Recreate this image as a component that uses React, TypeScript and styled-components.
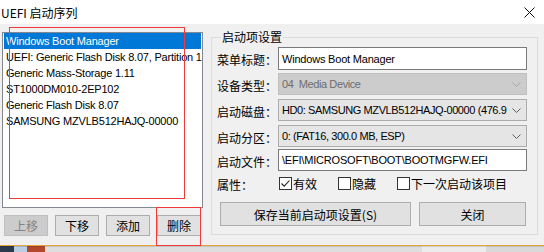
import React from 'react';
import styled, { createGlobalStyle } from 'styled-components';

const GlobalStyle = createGlobalStyle`
  html, body {
    margin: 0;
    padding: 0;
    background: #f0f0f0;
  }
  body {
    font-family: "Liberation Sans", "Noto Sans CJK SC", sans-serif;
    font-size: 11px;
    color: #000;
  }
  * {
    box-sizing: border-box;
  }
`;

const cjk = `"Noto Sans CJK SC", "Liberation Sans", sans-serif`;

const bootEntries = [
  'Windows Boot Manager',
  'UEFI: Generic Flash Disk 8.07, Partition 1',
  'Generic Mass-Storage 1.11',
  'ST1000DM010-2EP102',
  'Generic Flash Disk 8.07',
  'SAMSUNG MZVLB512HAJQ-00000',
];

const taskbar = [
  { w: 14, bg: '#2b3a4c' },
  { w: 13, bg: '#b9cde3' },
  { w: 18, bg: '#b4482a' },
  { w: 377, bg: '#dedede' },
  { w: 64, bg: '#ececec' },
  { w: 58, bg: '#d9d9d9' },
];

const App = () => {
  return (
    <>
      <GlobalStyle />
      <Window>
        <TitleBar>
          <Title>UEFI 启动序列</Title>
          <CloseIcon viewBox="0 0 11 11">
            <path d="M0.5 0.5 L10.5 10.5 M10.5 0.5 L0.5 10.5" stroke="#111" strokeWidth="1" />
          </CloseIcon>
        </TitleBar>

        <Body>
          <LeftPane>
            <ListBox>
              {bootEntries.map((name, i) => (
                <ListRow key={name} $selected={i === 0}>
                  {name}
                </ListRow>
              ))}
            </ListBox>
            <ButtonRow>
              <SmallButton disabled>上移</SmallButton>
              <SmallButton>下移</SmallButton>
              <SmallButton>添加</SmallButton>
              <SmallButton>删除</SmallButton>
            </ButtonRow>
          </LeftPane>

          <Group>
            <Legend>启动项设置</Legend>

            <FieldRow $gap={0} $h={23}>
              <Label>菜单标题：</Label>
              <TextBox>Windows Boot Manager</TextBox>
            </FieldRow>
            <FieldRow $gap={3} $h={22}>
              <Label>设备类型：</Label>
              <Select $disabled>
                <span>04&nbsp; Media Device</span>
                <Chevron $disabled />
              </Select>
            </FieldRow>
            <FieldRow $gap={4} $h={22}>
              <Label>启动磁盘：</Label>
              <Select>
                <span>HD0: SAMSUNG MZVLB512HAJQ-00000 (476.9</span>
                <Chevron />
              </Select>
            </FieldRow>
            <FieldRow $gap={4} $h={22}>
              <Label>启动分区：</Label>
              <Select>
                <span>0: (FAT16, 300.0 MB, ESP)</span>
                <Chevron />
              </Select>
            </FieldRow>
            <FieldRow $gap={2} $h={22}>
              <Label>启动文件：</Label>
              <TextBox>\EFI\MICROSOFT\BOOT\BOOTMGFW.EFI</TextBox>
            </FieldRow>
            <FieldRow $gap={3} $h={16}>
              <Label>属性：</Label>
              <CheckGroup>
                <CheckItem>
                  <CheckBox>
                    <svg width="11" height="11" viewBox="0 0 11 11">
                      <path d="M1.5 5.5 L4.2 8.2 L9.5 2.5" stroke="#222" strokeWidth="1.1" fill="none" />
                    </svg>
                  </CheckBox>
                  有效
                </CheckItem>
                <CheckItem>
                  <CheckBox />
                  隐藏
                </CheckItem>
                <CheckItem>
                  <CheckBox />
                  下一次启动该项目
                </CheckItem>
              </CheckGroup>
            </FieldRow>

            <ActionRow>
              <ActionButton $w={191}>保存当前启动项设置(S)</ActionButton>
              <ActionButton $w={107}>关闭</ActionButton>
            </ActionRow>
          </Group>
        </Body>

        <AccentLine />
        <Taskbar>
          {taskbar.map((s, i) => (
            <TaskSegment key={i} $w={s.w} $bg={s.bg} />
          ))}
        </Taskbar>

        <Marker style={{ left: 9, top: 27, width: 176, height: 172 }} />
        <Marker style={{ left: 156, top: 207, width: 45, height: 39 }} />
      </Window>
    </>
  );
};

const Chevron = ({ $disabled }: { $disabled?: boolean }) => (
  <ChevronIcon viewBox="0 0 9 5">
    <path d="M0.5 0.5 L4.5 4.5 L8.5 0.5" stroke={$disabled ? '#a9a9a9' : '#606060'} strokeWidth="1" fill="none" />
  </ChevronIcon>
);

export default App;

const Window = styled.div`
  position: relative;
  width: 544px;
  height: 252px;
  overflow: hidden;
  background: #f0f0f0;
  display: flex;
  flex-direction: column;
`;

const TitleBar = styled.div`
  height: 24px;
  flex: none;
  background: #fff;
  display: flex;
  align-items: center;
  justify-content: space-between;
  padding: 0 9px 0 1px;
`;

const Title = styled.span`
  font-family: ${cjk};
  font-size: 12px;
  color: #000;
`;

const CloseIcon = styled.svg`
  width: 11px;
  height: 11px;
`;

const Body = styled.div`
  height: 221px;
  flex: none;
  display: flex;
  padding: 8px 0 0 2px;
`;

const LeftPane = styled.div`
  width: 201px;
  display: flex;
  flex-direction: column;
`;

const ListBox = styled.div`
  height: 176px;
  background: #fff;
  border: 1px solid #828790;
  padding: 0 1px;
  overflow: hidden;
`;

const ListRow = styled.div<{ $selected?: boolean }>`
  height: 16px;
  line-height: 16px;
  padding-left: 2px;
  white-space: nowrap;
  letter-spacing: -0.2px;
  background: ${(p) => (p.$selected ? '#0078d7' : 'transparent')};
  color: ${(p) => (p.$selected ? '#fff' : '#000')};
`;

const ButtonRow = styled.div`
  display: flex;
  gap: 7px;
  margin-top: 7px;
  padding-left: 2px;
`;

const SmallButton = styled.button`
  width: 44px;
  height: 21px;
  padding: 0;
  font-family: ${cjk};
  font-size: 12px;
  color: #000;
  background: #e1e1e1;
  border: 1px solid #adadad;
  border-radius: 0;

  &:disabled {
    background: #cccccc;
    border-color: #bfbfbf;
    color: #838383;
  }
`;

const Group = styled.fieldset`
  width: 327px;
  height: 205px;
  margin: -2px 0 0 8px;
  padding: 3px 10px 0 5px;
  border: 1px solid #dcdcdc;
  min-inline-size: auto;
`;

const Legend = styled.legend`
  font-family: ${cjk};
  font-size: 12px;
  line-height: 14px;
  padding: 0 1px;
  margin-left: 4px;
`;

const FieldRow = styled.div<{ $gap: number; $h: number }>`
  display: grid;
  grid-template-columns: 61px 249px;
  align-items: center;
  height: ${(p) => p.$h}px;
  margin-top: ${(p) => p.$gap}px;
`;

const Label = styled.span`
  font-family: ${cjk};
  font-size: 12px;
  padding-top: 2px;
  white-space: nowrap;
`;

const TextBox = styled.div`
  height: 100%;
  display: flex;
  align-items: center;
  padding-left: 3px;
  background: #fff;
  border: 1px solid #7a7a7a;
  white-space: nowrap;
  overflow: hidden;
  letter-spacing: -0.2px;
`;

const Select = styled.div<{ $disabled?: boolean }>`
  height: 100%;
  display: flex;
  align-items: center;
  justify-content: space-between;
  padding: 0 5px 0 3px;
  background: ${(p) => (p.$disabled ? '#cccccc' : '#e5e5e5')};
  border: 1px solid ${(p) => (p.$disabled ? '#bfbfbf' : '#acacac')};
  color: ${(p) => (p.$disabled ? '#6d6d6d' : '#000')};
  white-space: nowrap;
  letter-spacing: -0.4px;
  overflow: hidden;

  span {
    flex: 1;
    min-width: 0;
  }
`;

const ChevronIcon = styled.svg`
  width: 9px;
  height: 5px;
  flex: none;
  margin-left: 4px;
`;

const CheckGroup = styled.div`
  display: flex;
  align-items: center;
  gap: 21px;
  padding-left: 1px;
`;

const CheckItem = styled.label`
  display: flex;
  align-items: center;
  gap: 1px;
  font-family: ${cjk};
  font-size: 12px;
  white-space: nowrap;
`;

const CheckBox = styled.span`
  width: 13px;
  height: 13px;
  display: flex;
  align-items: center;
  justify-content: center;
  background: #fff;
  border: 1px solid #333;
`;

const ActionRow = styled.div`
  display: flex;
  gap: 8px;
  margin-top: 12px;
  padding-left: 3px;
`;

const ActionButton = styled.button<{ $w: number }>`
  width: ${(p) => p.$w}px;
  height: 24px;
  padding: 0;
  font-family: ${cjk};
  font-size: 12px;
  color: #000;
  background: #e1e1e1;
  border: 1px solid #adadad;
  border-radius: 0;
`;

const AccentLine = styled.div`
  height: 1px;
  flex: none;
  background: #e8a33d;
`;

const Taskbar = styled.div`
  height: 6px;
  flex: none;
  display: flex;
`;

const TaskSegment = styled.div<{ $w: number; $bg: string }>`
  width: ${(p) => p.$w}px;
  flex: none;
  background: ${(p) => p.$bg};
  border-top: 1px solid rgba(0, 0, 0, 0.12);
`;

const Marker = styled.div`
  position: absolute;
  border: 1px solid #f03a3a;
  pointer-events: none;
`;
